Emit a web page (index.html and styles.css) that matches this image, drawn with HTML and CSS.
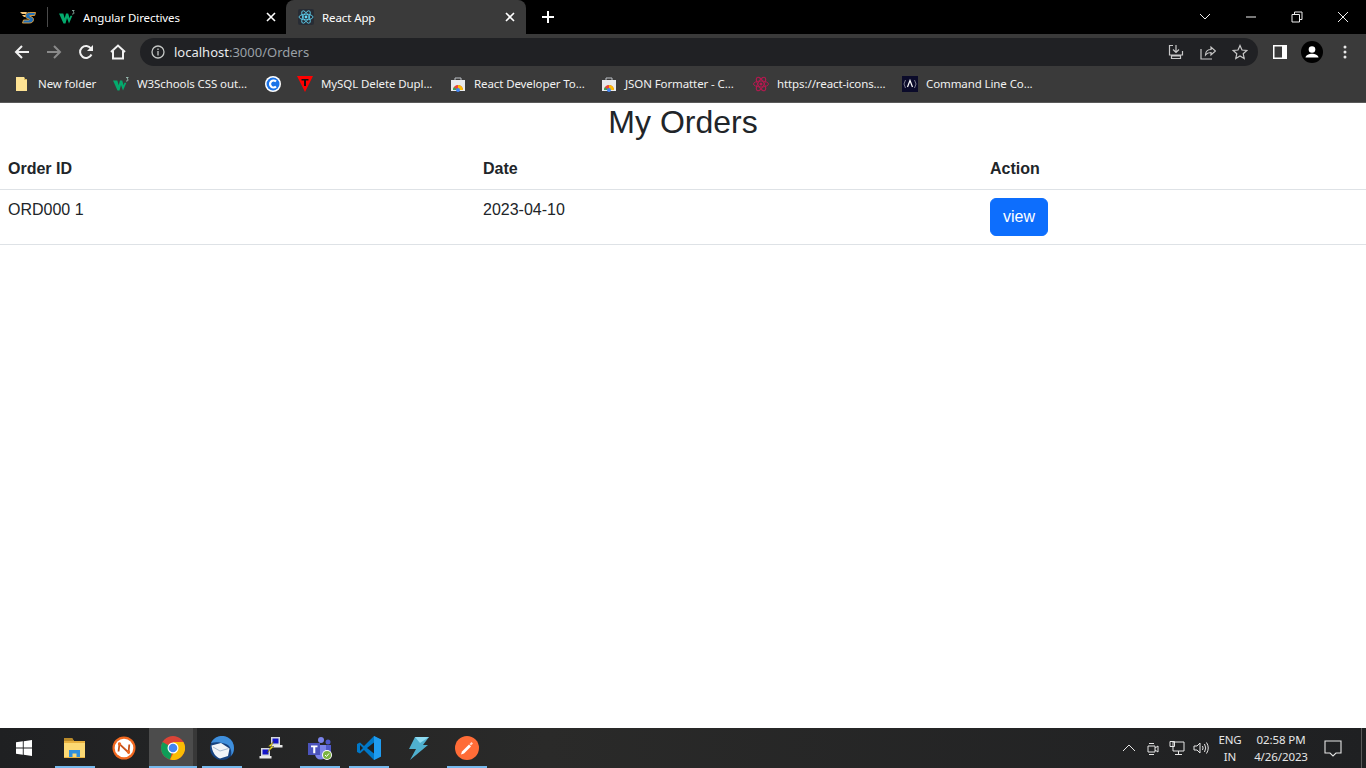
FILE: index.html
```html
<!DOCTYPE html>
<html lang="en">
<head>
  <meta charset="utf-8">
  <title>React App</title>
  <link rel="stylesheet" href="styles.css">
</head>
<body>
  <div class="browser">
    <div class="tabstrip">
      <div class="pinned">
        <svg class="fav" viewBox="0 0 16 16"><path d="M0 3h7l-1 2H2zM2 6h4L5 8H4z" fill="#f5c67a"/><path d="M15.500 3.500H9.500C7 3.500 5.500 5 5.500 7c0 2 2 2.500 3.500 3 .8.300.5 1-.3 1H3.500l-1 3h7c2.500 0 4-1.500 4-3.500 0-2-2-2.700-3.500-3.200-.7-.3-.5-.8.200-.8h4.500z" fill="#1f6fb8" stroke="#e9a33b" stroke-width=".9"/></svg>
      </div>
      <div class="tab">
        <svg class="fav" viewBox="0 0 16 16"><path d="M0 4.500h4.300l1.400 4.700 1.300-4.700h2.200l1.400 4.700.8-2.500h2L10 14.500 8 9l-1.500 5.500h-2z" fill="#04aa6d"/><path d="M13 1.500h2.200l-1.100 1.300c1.300.1 1.300 2.200-.2 2.200H13" fill="none" stroke="#cfe" stroke-width=".6"/></svg>
        <span class="tab-title">Angular Directives</span>
        <svg class="tab-x" viewBox="0 0 10 10"><path d="M1 1l8 8M9 1L1 9"/></svg>
      </div>
      <div class="tab tab-active">
        <svg class="fav" viewBox="0 0 16 16"><rect width="16" height="16" rx="2" fill="#282c34"/><g fill="none" stroke="#61dafb" stroke-width=".8"><ellipse cx="8" cy="8" rx="7" ry="2.800"/><ellipse cx="8" cy="8" rx="7" ry="2.800" transform="rotate(60 8 8)"/><ellipse cx="8" cy="8" rx="7" ry="2.800" transform="rotate(120 8 8)"/></g><circle cx="8" cy="8" r="1.400" fill="#61dafb"/></svg>
        <span class="tab-title">React App</span>
        <svg class="tab-x" viewBox="0 0 10 10"><path d="M1 1l8 8M9 1L1 9"/></svg>
      </div>
      <svg class="newtab" viewBox="0 0 12 12"><path d="M6 0v12M0 6h12"/></svg>
      <div class="winctl">
        <svg class="winbtn" viewBox="0 0 12 12"><path d="M1 3l5 5 5-5"/></svg>
        <svg class="winbtn" viewBox="0 0 12 12"><path d="M1 6h10"/></svg>
        <svg class="winbtn" viewBox="0 0 12 12"><path d="M1 3.500h7.500v7.500H1zM3.500 3.500V1H11v7.500H8.500"/></svg>
        <svg class="winbtn" viewBox="0 0 12 12"><path d="M1 1l10 10M11 1L1 11"/></svg>
      </div>
    </div>

    <div class="toolbar">
      <svg class="navbtn" viewBox="0 0 16 16"><path d="M15 8H2M8 2L2 8l6 6"/></svg>
      <svg class="navbtn navbtn-off" viewBox="0 0 16 16"><path d="M1 8h13M8 2l6 6-6 6"/></svg>
      <svg class="navbtn" viewBox="0 0 16 16"><path d="M13.500 10.500A6 6 0 1 1 13 4.500"/><path class="solid" d="M15 1v6H9z"/></svg>
      <svg class="navbtn" viewBox="0 0 16 16"><path d="M1 8l7-6.500L15 8M3 7v7.500h10V7"/></svg>
      <div class="omnibox">
        <svg class="info" viewBox="0 0 14 14"><circle cx="7" cy="7" r="6"/><path d="M7 6v4.500M7 3.500v1.500"/></svg>
        <span class="url"><span class="url-host">localhost</span>:3000/Orders</span>
        <svg class="omni-ic" viewBox="0 0 16 16"><path d="M5 1.500H1.500v9.500h13V7M8 1v7.500M5 5.500l3 3 3-3M3.500 14.500h9V12h-9z"/></svg>
        <svg class="omni-ic" viewBox="0 0 16 16"><path d="M1 5v10h11M5.500 11c0-4 3-5.500 5.500-5.500V3l4.500 4-4.500 4V8.500C9 8.500 7 9 5.500 11z"/></svg>
        <svg class="omni-ic" viewBox="0 0 16 16"><path d="M8 1.500l2 4.500 4.800.5-3.600 3.200 1 4.800L8 12l-4.200 2.500 1-4.800L1.200 6.500 6 6z"/></svg>
      </div>
      <svg class="side-ic" viewBox="0 0 14 14"><path fill-rule="evenodd" d="M0 0h14v14H0zM1.500 1.500v11H9v-11z"/></svg>
      <div class="avatar"><svg viewBox="0 0 22 22"><circle cx="11" cy="8.500" r="3.300" fill="#fff"/><path d="M4.500 16.500c0-2.500 4-3.800 6.500-3.800s6.500 1.300 6.500 3.800z" fill="#fff"/></svg></div>
      <svg class="menu-ic" viewBox="0 0 4 14"><circle cx="2" cy="2" r="1.500"/><circle cx="2" cy="7" r="1.500"/><circle cx="2" cy="12" r="1.500"/></svg>
    </div>

    <div class="bookmarks">
      <div class="bm">
        <svg class="fav" viewBox="0 0 16 16"><path d="M2 1h8l1 2h2v12H2z" fill="#fde293"/><path d="M10 1l1 2h2v1h-3z" fill="#d8b85c"/></svg>
        <span class="bm-name bm-w1">New folder</span>
      </div>
      <div class="bm">
        <svg class="fav" viewBox="0 0 16 16"><path d="M0 4.500h4.300l1.400 4.700 1.300-4.700h2.200l1.400 4.700.8-2.500h2L10 14.500 8 9l-1.500 5.500h-2z" fill="#04aa6d"/><path d="M13 1.500h2.200l-1.100 1.300c1.300.1 1.300 2.200-.2 2.200H13" fill="none" stroke="#cfe" stroke-width=".6"/></svg>
        <span class="bm-name bm-w2">W3Schools CSS out...</span>
      </div>
      <div class="bm">
        <svg class="fav" viewBox="0 0 16 16"><circle cx="8" cy="8" r="8" fill="#fff"/><circle cx="8" cy="8" r="6.500" fill="#1a73e8"/><path d="M11 5.500a3.500 3.500 0 1 0 0 5" fill="none" stroke="#fff" stroke-width="2.200"/></svg>
      </div>
      <div class="bm">
        <svg class="fav" viewBox="0 0 16 16"><path d="M0 0h16L8 16z" fill="#f00"/><path d="M4.500 3h7v1.500H9V10H7V4.500H4.500z" fill="#111"/></svg>
        <span class="bm-name bm-w3">MySQL Delete Dupl...</span>
      </div>
      <div class="bm">
        <svg class="fav" viewBox="0 0 16 16"><path d="M1 4h14v11H1z" fill="#e8eaed"/><path d="M5 4V2h6v2" fill="none" stroke="#bdc1c6"/><path d="M3 14a5 5 0 0 1 10 0z" fill="#ea4335"/><path d="M8 14V9a5 5 0 0 1 5 5z" fill="#fbbc04"/><path d="M3 14a5 5 0 0 1 1-3l3 3z" fill="#34a853"/><circle cx="8" cy="14" r="2" fill="#4285f4"/></svg>
        <span class="bm-name bm-w4">React Developer To...</span>
      </div>
      <div class="bm">
        <svg class="fav" viewBox="0 0 16 16"><path d="M1 4h14v11H1z" fill="#e8eaed"/><path d="M5 4V2h6v2" fill="none" stroke="#bdc1c6"/><path d="M3 14a5 5 0 0 1 10 0z" fill="#ea4335"/><path d="M8 14V9a5 5 0 0 1 5 5z" fill="#fbbc04"/><path d="M3 14a5 5 0 0 1 1-3l3 3z" fill="#34a853"/><circle cx="8" cy="14" r="2" fill="#4285f4"/></svg>
        <span class="bm-name bm-w5">JSON Formatter - C...</span>
      </div>
      <div class="bm">
        <svg class="fav" viewBox="0 0 16 16"><g fill="none" stroke="#b3194f" stroke-width="1"><ellipse cx="8" cy="8" rx="7.500" ry="3"/><ellipse cx="8" cy="8" rx="7.500" ry="3" transform="rotate(60 8 8)"/><ellipse cx="8" cy="8" rx="7.500" ry="3" transform="rotate(120 8 8)"/></g><circle cx="8" cy="8" r="1.500" fill="#b3194f"/></svg>
        <span class="bm-name bm-w6">https://react-icons....</span>
      </div>
      <div class="bm">
        <svg class="fav" viewBox="0 0 16 16"><rect width="16" height="16" fill="#0b0b2a"/><path d="M5.500 11L8 4.500l2.500 6.500" fill="none" stroke="#fff" stroke-width="1.200"/><path d="M3.500 4L2 8l1.500 4M12.500 4L14 8l-1.500 4" fill="none" stroke="#99a" stroke-width=".8"/></svg>
        <span class="bm-name bm-w7">Command Line Co...</span>
      </div>
    </div>

    <main class="page">
      <h2 class="page-title">My Orders</h2>
      <table class="orders">
        <thead>
          <tr>
            <th class="col-id">Order ID</th>
            <th class="col-date">Date</th>
            <th>Action</th>
          </tr>
        </thead>
        <tbody>
          <tr>
            <td>ORD000 1</td>
            <td>2023-04-10</td>
            <td><button class="btn-view">view</button></td>
          </tr>
        </tbody>
      </table>
    </main>

    <footer class="taskbar">
      <svg class="start" viewBox="0 0 16 16"><path d="M0 2.300l6.800-1v6.300H0zM7.700 1.200L16 0v7.600H7.700zM0 8.400h6.800v6.300l-6.800-1zM7.700 8.400H16V16l-8.300-1.200z"/></svg>
      <div class="task task-open">
        <svg viewBox="0 0 24 24"><path d="M1 2h8l2 3h11v17H1z" fill="#e8b13f"/><path d="M1 2h8l2 3H1z" fill="#b98a2a"/><path d="M1 7h21v14H1z" fill="#fcd974"/><path d="M6 21v-7h11v7h-3.500v-3.500h-4V21z" fill="#2f8fdc"/></svg>
      </div>
      <div class="task">
        <svg viewBox="0 0 24 24"><circle cx="12" cy="12" r="11.500" fill="#f2681f"/><circle cx="12" cy="12" r="9.300" fill="#fff"/><path d="M6.500 15.500L7.500 8l9 8.500.8-8" fill="none" stroke="#c8531a" stroke-width="1.800"/><circle cx="7.500" cy="8" r="1.700" fill="#f2681f"/><circle cx="16.500" cy="16" r="1.700" fill="#f2681f"/></svg>
      </div>
      <div class="task task-active">
        <svg viewBox="0 0 24 24"><circle cx="12" cy="12" r="12" fill="#db4437"/><path d="M12 12L1.600 6A12 12 0 0 0 9 23.600z" fill="#0f9d58"/><path d="M12 6h10.400A12 12 0 0 1 9 23.600L14 14z" fill="#fbbc04"/><circle cx="12" cy="12" r="5.500" fill="#fff"/><circle cx="12" cy="12" r="4.300" fill="#4285f4"/></svg>
      </div>
      <div class="task task-open">
        <svg viewBox="0 0 24 24"><circle cx="12" cy="12" r="12" fill="#16427f"/><path d="M1 7A12 12 0 0 1 18 1.600c4 2.400 6 6.400 6 10.400 0 3-1 6-3 8 1-4 0-10-5-12C10 6 5 6 1 7z" fill="#3f8fdc"/><path d="M1.500 9.500L11 7l8.500 5.500L18 20l-8 2.500C5 21 2 15 1.500 9.500z" fill="#f1f4f8"/><path d="M3 11l7 4 8.500-2.500" fill="none" stroke="#a9bbd0"/></svg>
      </div>
      <div class="task">
        <svg viewBox="0 0 24 24"><path d="M12 1h9v8h-9z" fill="#d5d8dc"/><path d="M13.500 2.500h6v5h-6z" fill="#1414c8"/><path d="M11.500 9h12v2.500h-12z" fill="#e8e8e8"/><path d="M2 12h9v8H2z" fill="#d5d8dc"/><path d="M3.500 13.500h6v5h-6z" fill="#1414c8"/><path d="M.5 20h12v2.500H.5z" fill="#e8e8e8"/><path d="M15 5l-6 5.500h3L8 17l7-6.500h-3z" fill="#f7e21c" stroke="#222" stroke-width=".4"/></svg>
      </div>
      <div class="task task-open">
        <svg viewBox="0 0 24 24"><circle cx="13" cy="4" r="3" fill="#7b83eb"/><circle cx="20" cy="6" r="2.500" fill="#5059c9"/><path d="M15 9h8v8a4 4 0 0 1-8 0z" fill="#5059c9"/><path d="M7 9h11v9a5 5 0 0 1-11 0z" fill="#7b83eb"/><path d="M0 7h12v12H0z" fill="#4b53bc"/><path d="M3 9.500h6.500v1.800H7.300v6H5.200v-6H3z" fill="#fff"/><circle cx="19" cy="19" r="5" fill="#fff"/><circle cx="19" cy="19" r="4" fill="#7cb342"/><path d="M17 19l1.500 1.500 2.500-3" fill="none" stroke="#fff"/></svg>
      </div>
      <div class="task task-open">
        <svg viewBox="0 0 24 24"><path d="M17 0l7 3.500v17L17 24 7 14l-4 3.500L0 16V8l3-1.500 4 3.500z" fill="#0078c8"/><path d="M17 0l7 3.500v17L17 24z" fill="#1f9cf0"/><path d="M17 6.500L10 12l7 5.500z" fill="#202020"/><path d="M3 9v6l3-3z" fill="#202020"/></svg>
      </div>
      <div class="task">
        <svg viewBox="0 0 24 24"><path d="M9 1h14l-6 8h5L4 24l6-11H3z" fill="#4fb0cf"/><path d="M9 1h14l-9 6z" fill="#8fdcf2"/></svg>
      </div>
      <div class="task task-open">
        <svg viewBox="0 0 24 24"><circle cx="12" cy="12" r="12" fill="#ff6c37"/><path d="M6 18.500l1-3 7-7 2 2-7 7z" fill="#fff"/><path d="M14.500 8l2-2 1.500 1.500-2 2z" fill="#ffd7c8"/></svg>
      </div>

      <div class="tray">
        <svg class="tray-ic" viewBox="0 0 16 16"><path d="M2 11l6-6 6 6"/></svg>
        <svg class="tray-ic" viewBox="0 0 16 16"><path d="M3 6h7v6H3zM10 8l3-2v6l-3-2M4 3.500h5M4 14.500h5"/></svg>
        <svg class="tray-ic" viewBox="0 0 16 16"><path d="M4 2h11v9H4zM1 1.500h4.500v5H1zM9.500 11v3M6 14.500h7"/></svg>
        <svg class="tray-ic" viewBox="0 0 16 16"><path d="M1 6h3l3-3v10l-3-3H1zM9.500 6q1.200 2 0 4M11.500 4q2.500 4 0 8M13.500 2.500q3.500 5.500 0 11"/></svg>
        <div class="lang"><span>ENG</span><span>IN</span></div>
        <div class="clock"><span>02:58 PM</span><span>4/26/2023</span></div>
        <svg class="notif" viewBox="0 0 18 18"><path d="M1 2h16v12h-5l-3 3-3-3H1z"/></svg>
        <div class="peek"></div>
      </div>
    </footer>
  </div>
</body>
</html>
```
FILE: styles.css
```css
* {
  box-sizing: border-box;
}
body {
  margin: 0;
  background-color: #fff;
  font-family: "Liberation Sans", Arial, sans-serif;
  overflow: hidden;
}
svg {
  display: block;
  flex: none;
}
.browser {
  display: flex;
  flex-direction: column;
  height: 100vh;
}

/* tabs */
.tabstrip {
  display: flex;
  align-items: center;
  height: 34px;
  background-color: #000;
  color: #fff;
  font-family: "Noto Sans", sans-serif;
  font-size: 11.5px;
  letter-spacing: -0.1px;
}
.fav {
  width: 16px;
  height: 16px;
}
.pinned {
  display: flex;
  align-items: center;
  width: 48px;
  height: 20px;
  padding-left: 20px;
  border-right: 1px solid #4a4a4a;
}
.tab {
  display: flex;
  align-items: center;
  width: 238px;
  height: 34px;
  padding: 0 10px 0 11px;
}
.tab-active {
  width: 240px;
  padding: 0 11px 0 12px;
  background-color: #3a3a3a;
  border-radius: 8px 8px 0 0;
}
.tab-title {
  flex: 1;
  margin-left: 8px;
  white-space: nowrap;
}
.tab-x {
  width: 10px;
  height: 10px;
  fill: none;
  stroke: #fff;
  stroke-width: 1.600;
}
.newtab {
  width: 12px;
  height: 12px;
  margin-left: 16px;
  fill: none;
  stroke: #fff;
  stroke-width: 2;
}
.winctl {
  display: flex;
  gap: 34px;
  margin-left: auto;
  padding-right: 17px;
}
.winbtn {
  width: 12px;
  height: 12px;
  fill: none;
  stroke: #f0f0f0;
  stroke-width: 1;
}

/* address bar */
.toolbar {
  display: flex;
  align-items: center;
  height: 33px;
  padding: 3px 0 0 14px;
  background-color: #3a3a3a;
}
.navbtn {
  width: 16px;
  height: 16px;
  margin-right: 16px;
  fill: none;
  stroke: #f1f1f1;
  stroke-width: 2;
}
.navbtn .solid {
  fill: #f1f1f1;
  stroke: none;
}
.navbtn-off {
  stroke: #8a8a8a;
}
.omnibox {
  display: flex;
  align-items: center;
  width: 1118px;
  height: 28px;
  margin-left: -2px;
  padding: 0 10px 0 11px;
  background-color: #202124;
  border-radius: 14px;
}
.info {
  width: 14px;
  height: 14px;
  fill: none;
  stroke: #c4c7c5;
  stroke-width: 1.300;
}
.url {
  flex: 1;
  margin-left: 9px;
  color: #9aa0a6;
  font-family: "Noto Sans", sans-serif;
  font-size: 13px;
}
.url-host {
  color: #e8eaed;
}
.omni-ic {
  width: 16px;
  height: 16px;
  margin-left: 16px;
  fill: none;
  stroke: #c8c8c8;
  stroke-width: 1.200;
}
.side-ic {
  width: 14px;
  height: 14px;
  margin-left: 15px;
  fill: #fff;
}
.avatar {
  width: 22px;
  height: 22px;
  margin-left: 14px;
  background-color: #000;
  border-radius: 50%;
}
.menu-ic {
  width: 4px;
  height: 14px;
  margin-left: 20px;
  fill: #e8e8e8;
}

/* bookmarks */
.bookmarks {
  display: flex;
  align-items: center;
  gap: 16px;
  height: 36px;
  padding: 0 0 2px 14px;
  background-color: #3a3a3a;
  border-bottom: 1px solid #5a5a5a;
  color: #f1f1f1;
  font-family: "Noto Sans", sans-serif;
  font-size: 11.5px;
  letter-spacing: -0.1px;
}
.bm {
  display: flex;
  align-items: center;
  gap: 8px;
}
.bm-name {
  white-space: nowrap;
}
.bm-w1 { width: 59px; }
.bm-w2 { width: 112px; }
.bm-w3 { width: 113px; }
.bm-w4 { width: 111px; }
.bm-w5 { width: 112px; }
.bm-w6 { width: 109px; }
.bm-w7 { width: 108px; }

/* page */
.page {
  flex: 1;
  color: #212529;
  font-size: 16px;
  line-height: 1.5;
}
.page-title {
  margin: 0 0 8px;
  font-size: 32px;
  font-weight: normal;
  line-height: 1.2;
  text-align: center;
}
.orders {
  width: 100%;
  border-collapse: collapse;
  table-layout: fixed;
}
.orders th,
.orders td {
  padding: 8px;
  border-bottom: 1px solid #dee2e6;
  text-align: left;
  vertical-align: top;
}
.orders th {
  font-weight: bold;
}
.col-id {
  width: 475px;
}
.col-date {
  width: 507px;
}
.btn-view {
  display: block;
  padding: 6px 12px;
  background-color: #0d6efd;
  border: 1px solid #0d6efd;
  border-radius: 6px;
  color: #fff;
  font-family: inherit;
  font-size: 16px;
  line-height: 24px;
}

/* windows taskbar */
.taskbar {
  display: flex;
  align-items: stretch;
  height: 40px;
  padding-left: 16px;
  background: linear-gradient(90deg, #1f2022 0%, #2a2a29 40%, #1f2022 100%);
  color: #e6e6e6;
  font-family: "Noto Sans", sans-serif;
  font-size: 11.5px;
  letter-spacing: -0.1px;
}
.start {
  align-self: center;
  width: 16px;
  height: 16px;
  margin-right: 18px;
  fill: #fff;
}
.task {
  display: flex;
  align-items: center;
  justify-content: center;
  width: 49px;
  height: 40px;
}
.task svg {
  width: 24px;
  height: 24px;
}
.task-open {
  background: linear-gradient(#76b9ed, #76b9ed) center bottom / 40px 2px no-repeat;
}
.task-active {
  background:
    linear-gradient(#76b9ed, #76b9ed) right bottom / 48px 2px no-repeat,
    linear-gradient(90deg, transparent 1px, #4c4c4c 1px, #4c4c4c 45px, #383838 45px);
}
.tray {
  display: flex;
  align-items: center;
  margin-left: auto;
  padding-right: 4px;
}
.tray-ic {
  width: 16px;
  height: 16px;
  margin-right: 8px;
  fill: none;
  stroke: #e6e6e6;
  stroke-width: 1;
}
.lang,
.clock {
  display: flex;
  flex-direction: column;
  align-items: center;
  line-height: 17px;
}
.lang {
  margin-left: -1px;
  width: 28px;
}
.clock {
  margin-left: 3px;
  width: 68px;
}
.notif {
  width: 18px;
  height: 18px;
  margin-left: 9px;
  fill: none;
  stroke: #e6e6e6;
  stroke-width: 1.100;
}
.peek {
  width: 1px;
  height: 40px;
  margin-left: 19px;
  background-color: #5a5a5a;
}
```
